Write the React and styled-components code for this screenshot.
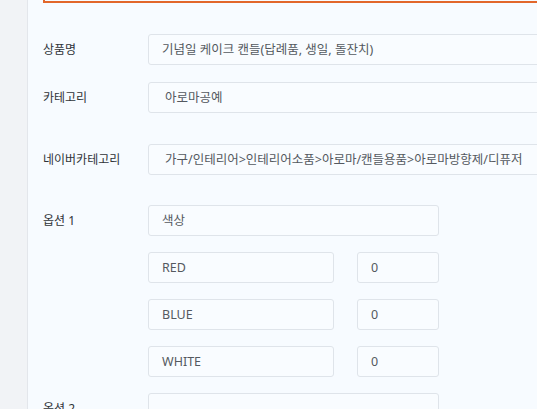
import React from "react";
import styled, { createGlobalStyle } from "styled-components";

const GlobalStyle = createGlobalStyle`
  html, body { margin: 0; padding: 0; overflow: hidden; }
  body {
    font-family: "Noto Sans", "Noto Sans CJK KR", sans-serif;
    font-size: 12px;
  }
  * { box-sizing: border-box; }
`;

const Page = styled.div`
  display: flex;
  width: 537px;
  height: 409px;
  overflow: hidden;
`;

const Sidebar = styled.div`
  flex: 0 0 28px;
  background: #f1f3f6;
  border-right: 1px solid #e3e6eb;
`;

const Main = styled.main`
  flex: 1;
  min-width: 0;
  background: #f7fbff;
  padding-left: 15px;
  overflow: hidden;
`;

const TopBox = styled.div`
  width: 600px;
  height: 3px;
  border-left: 2px solid #e2672b;
  border-bottom: 2px solid #e2672b;
`;

const Form = styled.div`
  display: flex;
  flex-direction: column;
  padding-top: 31px;
`;

const Row = styled.div`
  display: grid;
  grid-template-columns: 105px 1fr;
  align-items: start;
  margin-top: ${(p) => p.$gap || 0}px;
`;

const Label = styled.div`
  height: 31px;
  line-height: 31px;
  color: #2f3338;
  font-size: 12px;
  white-space: nowrap;
`;

const Stack = styled.div`
  display: flex;
  flex-direction: column;
  gap: 16px;
`;

const Line = styled.div`
  display: flex;
  gap: 23px;
`;

const Field = styled.div`
  width: ${(p) => p.$w}px;
  height: 31px;
  line-height: 29px;
  padding-left: ${(p) => p.$pad || 13}px;
  border: 1px solid #dfe4ea;
  border-radius: 3px;
  background: #f9fcff;
  color: #545960;
  font-size: 12.5px;
  white-space: nowrap;
  overflow: hidden;
`;

const options = [
  { name: "RED", price: "0" },
  { name: "BLUE", price: "0" },
  { name: "WHITE", price: "0" },
];

export default function App() {
  return (
    <>
      <GlobalStyle />
      <Page>
        <Sidebar />
        <Main>
          <TopBox />
          <Form>
            <Row>
              <Label>상품명</Label>
              <Field $w={420}>기념일 케이크 캔들(답례품, 생일, 돌잔치)</Field>
            </Row>
            <Row $gap={17}>
              <Label>카테고리</Label>
              <Field $w={420} $pad={16}>아로마공예</Field>
            </Row>
            <Row $gap={31}>
              <Label>네이버카테고리</Label>
              <Field $w={420} $pad={16}>
                가구/인테리어&gt;인테리어소품&gt;아로마/캔들용품&gt;아로마방향제/디퓨저
              </Field>
            </Row>
            <Row $gap={30}>
              <Label>옵션 1</Label>
              <Stack>
                <Field $w={291}>색상</Field>
                {options.map((o) => (
                  <Line key={o.name}>
                    <Field $w={186}>{o.name}</Field>
                    <Field $w={82}>{o.price}</Field>
                  </Line>
                ))}
              </Stack>
            </Row>
            <Row $gap={16}>
              <Label>옵션 2</Label>
              <Field $w={291} />
            </Row>
          </Form>
        </Main>
      </Page>
    </>
  );
}
